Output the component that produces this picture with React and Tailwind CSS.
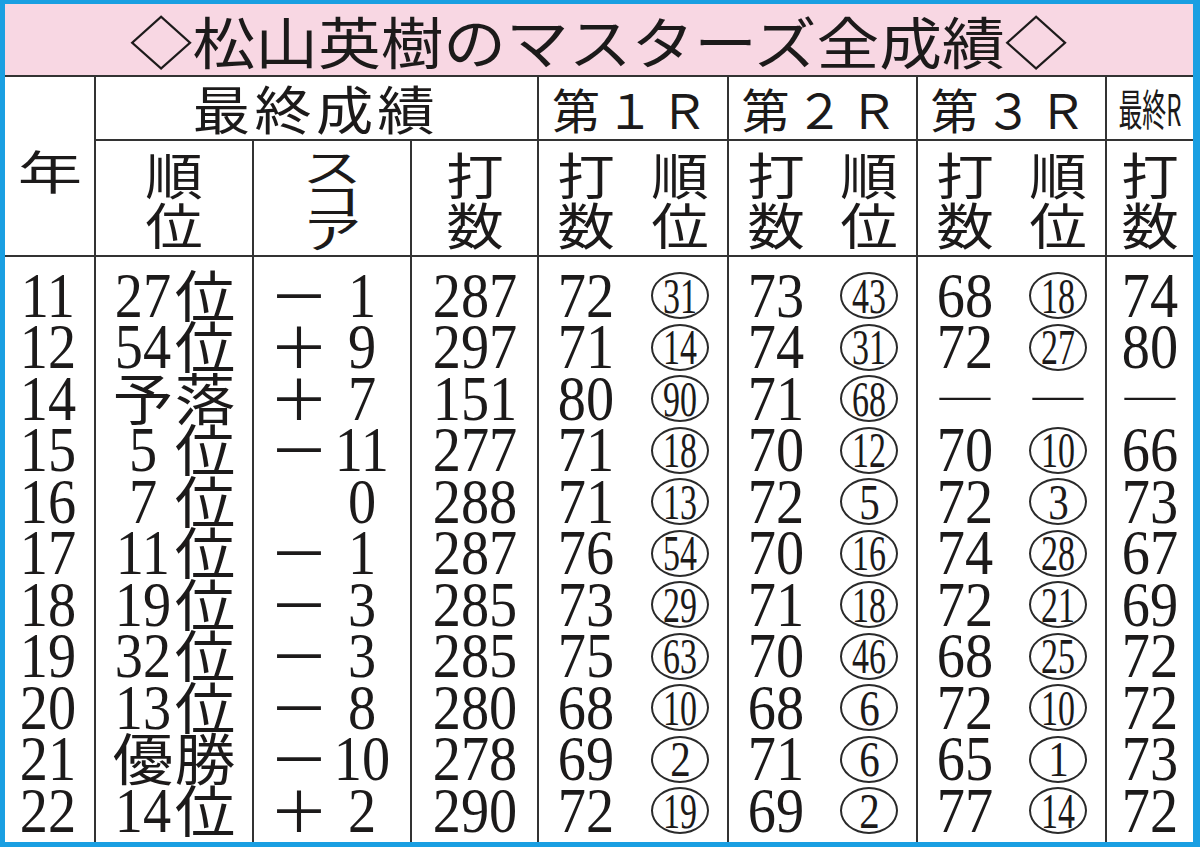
const ROWS = [
  { y: '11', rank: ['27', '位'], sign: '－', score: '1', total: '287', r1: ['72', '31'], r2: ['73', '43'], r3: ['68', '18'], fin: '74' },
  { y: '12', rank: ['54', '位'], sign: '＋', score: '9', total: '297', r1: ['71', '14'], r2: ['74', '31'], r3: ['72', '27'], fin: '80' },
  { y: '14', rank: ['予', '落'], sign: '＋', score: '7', total: '151', r1: ['80', '90'], r2: ['71', '68'], r3: null, fin: null },
  { y: '15', rank: ['5', '位'], sign: '－', score: '11', total: '277', r1: ['71', '18'], r2: ['70', '12'], r3: ['70', '10'], fin: '66' },
  { y: '16', rank: ['7', '位'], sign: '', score: '0', total: '288', r1: ['71', '13'], r2: ['72', '5'], r3: ['72', '3'], fin: '73' },
  { y: '17', rank: ['11', '位'], sign: '－', score: '1', total: '287', r1: ['76', '54'], r2: ['70', '16'], r3: ['74', '28'], fin: '67' },
  { y: '18', rank: ['19', '位'], sign: '－', score: '3', total: '285', r1: ['73', '29'], r2: ['71', '18'], r3: ['72', '21'], fin: '69' },
  { y: '19', rank: ['32', '位'], sign: '－', score: '3', total: '285', r1: ['75', '63'], r2: ['70', '46'], r3: ['68', '25'], fin: '72' },
  { y: '20', rank: ['13', '位'], sign: '－', score: '8', total: '280', r1: ['68', '10'], r2: ['68', '6'], r3: ['72', '10'], fin: '72' },
  { y: '21', rank: ['優', '勝'], sign: '－', score: '10', total: '278', r1: ['69', '2'], r2: ['71', '6'], r3: ['65', '1'], fin: '73' },
  { y: '22', rank: ['14', '位'], sign: '＋', score: '2', total: '290', r1: ['72', '19'], r2: ['69', '2'], r3: ['77', '14'], fin: '72' },
];

// serif digits, narrowed like the newspaper figures
const Num = ({ children }) => (
  <span className="inline-block font-['Liberation_Serif',serif] text-[64px] leading-[50px] scale-x-[0.88]">{children}</span>
);

const Ja = ({ children }) => (
  <span className="inline-block text-[56px] leading-[50px] scale-x-[1.08] -translate-y-[3px]">{children}</span>
);

const Dash = () => (
  <span className="inline-block text-[56px] leading-[50px] scale-x-[1.07] -translate-y-[3px]">―</span>
);

const Circ = ({ n }) => (
  <span className="flex h-[47px] w-[58px] items-center justify-center rounded-[50%] border-2 border-[#2a2a2a]">
    <span className={`inline-block font-['Liberation_Serif',serif] text-[50px] leading-[40px] ${n.length > 1 ? 'scale-x-[0.68]' : 'scale-x-[0.82]'}`}>{n}</span>
  </span>
);

const Cell = ({ children, className = '' }) => (
  <div className={`flex h-[51.5px] items-center ${className}`}>{children}</div>
);

const slot = (v) => (/\d/.test(v) ? <Num>{v}</Num> : <Ja>{v}</Ja>);

// two stacked header characters
const Pair = ({ a, b }) => (
  <div className="flex flex-col items-center text-[50px] leading-[50px]">
    <span className="inline-block scale-x-[1.15]">{a}</span>
    <span className="inline-block scale-x-[1.15]">{b}</span>
  </div>
);

const line = 'border-[#333]';

function Round({ data }) {
  return (
    <div className={`flex flex-col border-l-2 ${line} pt-[13px]`}>
      {data.map((d, i) => (
        <Cell key={i}>
          <div className="flex flex-1 justify-center">{d ? <Num>{d[0]}</Num> : <Dash />}</div>
          <div className="flex flex-1 justify-center">{d ? <Circ n={d[1]} /> : <Dash />}</div>
        </Cell>
      ))}
    </div>
  );
}

export default function App() {
  return (
    <div className="h-[847px] w-[1200px] bg-[#1a9fe2] pb-[5px] pl-[5px] pr-[7px] pt-[4px] font-['Noto_Sans_CJK_JP',sans-serif] text-[#1c1a1a]">
      <div className="bg-white">
        {/* title band */}
        <div className={`flex h-[73px] items-center justify-center border-b-2 ${line} bg-[#f8d7e3]`}>
          <span className="inline-block text-[56px] leading-none scale-x-[1.12]">◇松山英樹のマスターズ全成績◇</span>
        </div>

        <div className="grid grid-cols-[89px_158px_158px_127px_190px_189px_189px_88px] grid-rows-[64px_116px_585px]">
          {/* header row 1 */}
          <div className={`row-span-2 flex items-center justify-center border-b-2 ${line} pt-[6px]`}>
            <span className="inline-block text-[46px] leading-none scale-x-[1.4]">年</span>
          </div>
          <div className={`col-span-3 flex items-center justify-center border-b-2 border-l-2 ${line}`}>
            <span className="inline-block text-[52px] leading-none tracking-[4px] scale-x-[1.1]">最終成績</span>
          </div>
          {['第１Ｒ', '第２Ｒ', '第３Ｒ'].map((t) => (
            <div key={t} className={`flex items-center justify-center border-b-2 border-l-2 ${line}`}>
              <span className="inline-block text-[48px] leading-none tracking-[6px]">{t}</span>
            </div>
          ))}
          <div className={`flex items-center justify-center border-b-2 border-l-2 ${line}`}>
            {/* squeezed label: small type stretched tall */}
            <span className="inline-block whitespace-nowrap text-[24px] leading-none scale-y-[1.8]">最終R</span>
          </div>

          {/* header row 2 */}
          <div className={`flex items-center justify-center border-b-2 border-l-2 ${line}`}>
            <Pair a="順" b="位" />
          </div>
          <div className={`flex flex-col items-center justify-center border-b-2 border-l-2 ${line} text-[48px]`}>
            {['ス', 'コ', 'ア'].map((c) => (
              <div key={c} className="flex h-[33px] items-center justify-center">
                <span className="inline-block leading-[33px] scale-x-[1.25] scale-y-[0.8]">{c}</span>
              </div>
            ))}
          </div>
          <div className={`flex items-center justify-center border-b-2 border-l-2 ${line}`}>
            <Pair a="打" b="数" />
          </div>
          {[0, 1, 2].map((i) => (
            <div key={i} className={`flex items-center border-b-2 border-l-2 ${line}`}>
              <div className="flex flex-1 justify-center"><Pair a="打" b="数" /></div>
              <div className="flex flex-1 justify-center"><Pair a="順" b="位" /></div>
            </div>
          ))}
          <div className={`flex items-center justify-center border-b-2 border-l-2 ${line}`}>
            <Pair a="打" b="数" />
          </div>

          {/* data */}
          <div className="flex flex-col pr-[4px] pt-[13px]">
            {ROWS.map((r) => (
              <Cell key={r.y} className="justify-center"><Num>{r.y}</Num></Cell>
            ))}
          </div>
          <div className={`flex flex-col border-l-2 ${line} pt-[13px]`}>
            {ROWS.map((r) => (
              <Cell key={r.y} className="gap-[2px] pl-[17px]">
                <div className="flex w-[60px] justify-center">{slot(r.rank[0])}</div>
                <div className="flex w-[60px] justify-center">{slot(r.rank[1])}</div>
              </Cell>
            ))}
          </div>
          <div className={`flex flex-col border-l-2 ${line} pt-[13px]`}>
            {ROWS.map((r) => (
              <Cell key={r.y} className="gap-[3px] pl-[15px]">
                <div className="flex w-[60px] justify-center">{r.sign && <Ja>{r.sign}</Ja>}</div>
                <div className="flex w-[60px] justify-center"><Num>{r.score}</Num></div>
              </Cell>
            ))}
          </div>
          <div className={`flex flex-col border-l-2 ${line} pt-[13px]`}>
            {ROWS.map((r) => (
              <Cell key={r.y} className="justify-center"><Num>{r.total}</Num></Cell>
            ))}
          </div>
          <Round data={ROWS.map((r) => r.r1)} />
          <Round data={ROWS.map((r) => r.r2)} />
          <Round data={ROWS.map((r) => r.r3)} />
          <div className={`flex flex-col border-l-2 ${line} pt-[13px]`}>
            {ROWS.map((r) => (
              <Cell key={r.y} className="justify-center">{r.fin ? <Num>{r.fin}</Num> : <Dash />}</Cell>
            ))}
          </div>
        </div>
      </div>
    </div>
  );
}
